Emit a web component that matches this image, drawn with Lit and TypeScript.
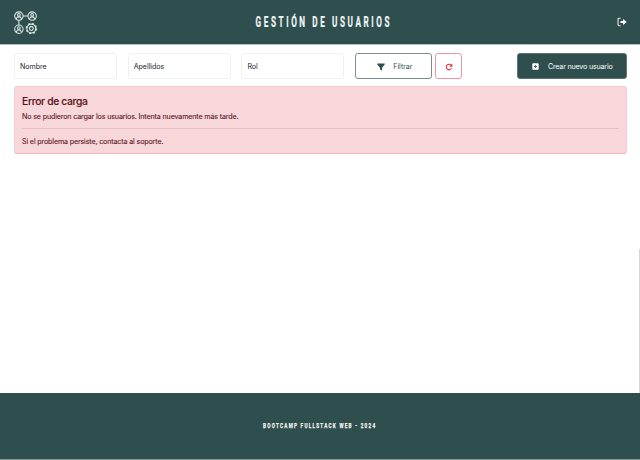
import { LitElement, html, css } from "lit";
import { customElement } from "lit/decorators.js";

const logo = html`<svg class="logo" viewBox="0 0 24 24" fill="none" stroke="#e0e8e8" stroke-width="1.1">
  <circle cx="5" cy="5.2" r="4.3" /><circle cx="5" cy="4" r="1.4" /><path d="M2.6 8.3V7.6Q2.8 6 5 6T7.4 7.6V8.3" />
  <circle cx="18.6" cy="5.2" r="4.3" /><circle cx="18.6" cy="4" r="1.4" /><path d="M16.2 8.3V7.6Q16.4 6 18.6 6T21 7.6V8.3" />
  <circle cx="5" cy="18.7" r="4.3" /><circle cx="5" cy="17.5" r="1.4" /><path d="M2.6 21.8V21.1Q2.8 19.5 5 19.5T7.4 21.1V21.8" />
  <path d="M9.3 5.2H14.3M5 9.5V14.4" />
  <circle cx="17.8" cy="18" r="4.5" /><circle cx="17.8" cy="18" r="2" />
  <circle cx="17.8" cy="18" r="5.2" stroke-width="1.3" stroke-dasharray="2.04 2.04" />
</svg>`;

@customElement("app-root")
export class AppRoot extends LitElement {
  static styles = css`
    :host { display: flex; flex-direction: column; height: 460px; overflow: hidden; box-sizing: border-box;
      background: #fff; font-family: Inter, sans-serif; font-size: 7.1px; letter-spacing: -.13px; color: #212529; }
    * { box-sizing: border-box; }
    svg { display: block; flex: none; }
    header { height: 45px; flex: none; background: #2f4f4f; display: grid; grid-template-columns: 1fr auto 1fr;
      align-items: center; padding: 0 13px 0 13.5px; border-bottom: 1px solid #b4c0c0; }
    .logo { width: 23.4px; height: 23.4px; margin-top: .5px; }
    h1 { margin: 0; width: 136px; padding: 0 0 0 7px; display: flex; justify-content: center; color: #f4f7f7; }
    .cond { font-family: Roboto, sans-serif; font-weight: 700; white-space: nowrap; display: block; }
    .title { font-size: 14.6px; line-height: 20px; letter-spacing: 4.6px; transform: scaleX(.56); margin: 0 -100px;
      -webkit-text-stroke: .2px #f4f7f7; }
    .exit { justify-self: end; width: 10px; height: 10px; margin-top: .5px; }
    .bar { display: flex; padding: 8px 13.5px 0 14px; height: 41px; flex: none; }
    .field { width: 103px; height: 26px; border: 1px solid #eef0f2; border-radius: 3px; padding: 1px 0 0 5px;
      display: flex; align-items: center; margin-right: 10.7px; }
    .field, .btn { letter-spacing: -.03px; }
    .btn { height: 26px; border-radius: 3px; display: flex; align-items: center; justify-content: center; padding-top: 1px; }
    .filter { width: 77px; border: 1px solid #7c8e8e; color: #2f4f4f; gap: 8.6px; margin-right: 3px; padding-left: 2px; }
    .reload { width: 27px; border: 1px solid #ee959e; color: #dc3545; }
    .new { width: 110px; background: #2f4f4f; color: #fff; gap: 8.5px; margin-left: auto; border: 1px solid #5b7474;
      letter-spacing: -.17px; padding-left: 2px; }
    .alert { margin: 0 13.5px 0 14px; height: 68px; flex: none; background: #f8d7da; border: 1px solid #f6cdd1;
      border-bottom-color: #f1b3ba; border-radius: 3px; padding: 7px 7px 0; color: #58151c; }
    h2 { margin: 0; font-size: 10.3px; line-height: 14px; font-weight: 500; letter-spacing: -.32px; -webkit-text-stroke: .15px #58151c; }
    p { margin: 0; line-height: 10px; -webkit-text-stroke: .1px #58151c; }
    .lead { margin-top: 4px; }
    hr { border: 0; height: 1px; background: #e7c0c5; margin: 6px 0 8px; }
    main { flex: 1; display: flex; flex-direction: column; align-items: flex-end; justify-content: flex-end; }
    .edge { width: 1px; height: 144px; background: #d6d6d8; }
    footer { height: 67px; flex: none; background: #2f4f4f; border-bottom: 1px solid #839696; color: #f4f7f7;
      display: flex; align-items: center; justify-content: center; }
    .foot { font-size: 8px; line-height: 10px; letter-spacing: 2.15px; transform: scaleX(.58); -webkit-text-stroke: .25px #f4f7f7; }
  `;

  render() {
    return html`
      <header>
        ${logo}
        <h1><span class="cond title">GESTIÓN DE USUARIOS</span></h1>
        <svg class="exit" viewBox="0 0 10 10">
          <path d="M3.6 1.2H2.2Q1 1.2 1 2.4V7.6Q1 8.8 2.2 8.8H3.6" fill="none" stroke="#e4eaea" stroke-width="1.1" />
          <path d="M3.5 4H6V2L9.7 5L6 8V6H3.5Z" fill="#fff" />
        </svg>
      </header>
      <div class="bar">
        <div class="field">Nombre</div>
        <div class="field">Apellidos</div>
        <div class="field">Rol</div>
        <div class="btn filter">
          <svg width="8" height="8" viewBox="0 0 8 8"><path d="M.3 .6H7.7V1.6L5.1 4.8V7.6L3 6.4V4.8L.3 1.6Z" fill="#2f4f4f" /></svg>
          <span>Filtrar</span>
        </div>
        <div class="btn reload">
          <svg width="8" height="8" viewBox="0 0 8 8"><path d="M6.2 2.3A2.8 2.8 0 1 0 6.5 5.3" fill="none" stroke="#dc3545" stroke-width="1.1" /><path d="M7.4 .6V3.7H4.3Z" fill="#dc3545" /></svg>
        </div>
        <div class="btn new">
          <svg width="7" height="7" viewBox="0 0 7 7"><rect x=".3" y=".3" width="6.4" height="6.4" rx=".9" fill="#fff" /><path d="M3.5 2V5M2 3.5H5" stroke="#2f4f4f" stroke-width=".8" /></svg>
          <span>Crear nuevo usuario</span>
        </div>
      </div>
      <section class="alert">
        <h2>Error de carga</h2>
        <p class="lead">No se pudieron cargar los usuarios. Intenta nuevamente más tarde.</p>
        <hr />
        <p>Si el problema persiste, contacta al soporte.</p>
      </section>
      <main><div class="edge"></div></main>
      <footer><span class="cond foot">BOOTCAMP FULLSTACK WEB - 2024</span></footer>
    `;
  }
}
